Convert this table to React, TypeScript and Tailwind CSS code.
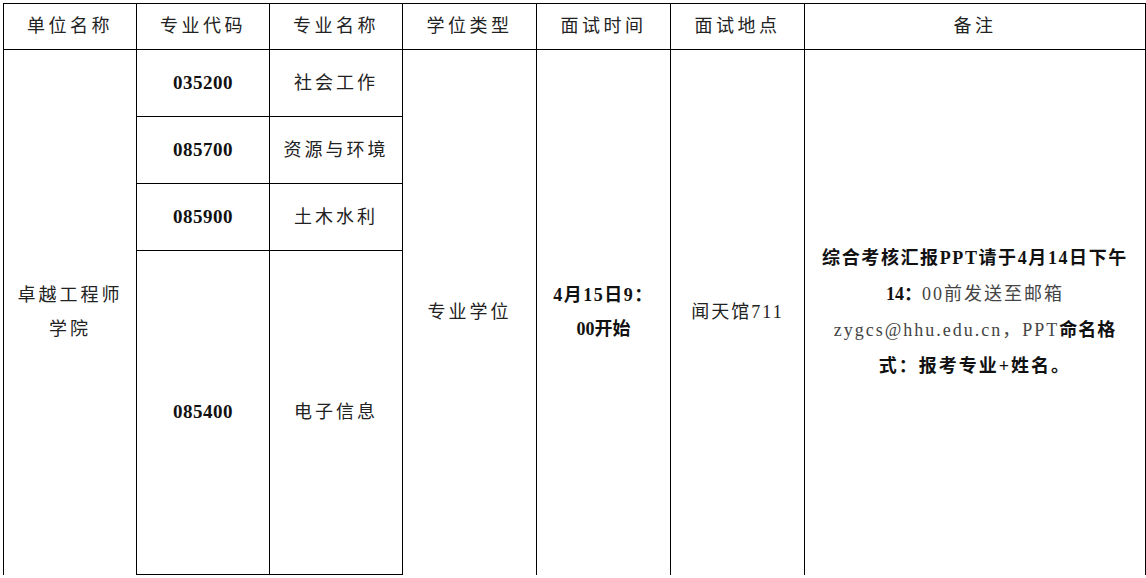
const cjk = '"Liberation Serif", "Noto Sans CJK SC", serif'

function Th({ children }: { children: React.ReactNode }) {
  return (
    <th className="border border-black font-normal text-[18px] tracking-[3.5px] text-[#222] text-center align-middle">
      {children}
    </th>
  )
}

export default function App() {
  return (
    <div className="w-[1146px] h-[578px] bg-white pt-[3px] pl-[3px] overflow-hidden" style={{ fontFamily: cjk }}>
      <table className="table-fixed border-collapse w-[1142px]">
        <colgroup>
          <col className="w-[133px]" />
          <col className="w-[133px]" />
          <col className="w-[133px]" />
          <col className="w-[134px]" />
          <col className="w-[134px]" />
          <col className="w-[134px]" />
          <col className="w-[341px]" />
        </colgroup>
        <thead>
          <tr className="h-[46px]">
            <Th>单位名称</Th>
            <Th>专业代码</Th>
            <Th>专业名称</Th>
            <Th>学位类型</Th>
            <Th>面试时间</Th>
            <Th>面试地点</Th>
            <Th>备注</Th>
          </tr>
        </thead>
        <tbody className="text-[18px] text-[#222]">
          <tr className="h-[67px]">
            <td rowSpan={4} className="border border-black border-b-0 text-center align-middle tracking-[3px] leading-[34px] px-2">
              卓越工程师<br />学院
            </td>
            <td className="border border-black text-center font-bold text-[19px] tracking-[0.5px] text-[#111]">035200</td>
            <td className="border border-black text-center tracking-[3px]">社会工作</td>
            <td rowSpan={4} className="border border-black border-b-0 text-center tracking-[3px]">专业学位</td>
            <td rowSpan={4} className="border border-black border-b-0 text-center font-semibold leading-[34px] text-[#111]">
              <span className="tracking-[1.5px]">4月15日9：</span>
              <br />
              00开始
            </td>
            <td rowSpan={4} className="border border-black border-b-0 text-center tracking-[2px]">闻天馆711</td>
            <td rowSpan={4} className="border border-black border-b-0 text-center align-middle leading-[36px] px-1">
              <div className="font-semibold text-[#111] tracking-[1.6px]">综合考核汇报PPT请于4月14日下午</div>
              <div>
                <span className="font-semibold text-[#111]">14：</span>
                <span className="text-[#444] tracking-[2px]">00前发送至邮箱</span>
              </div>
              <div>
                <span className="text-[#444] tracking-[2px]">zygcs@hhu.edu.cn，PPT</span>
                <span className="font-semibold text-[#111] tracking-[1px]">命名格</span>
              </div>
              <div className="font-semibold text-[#111] tracking-[2px]">式：报考专业+姓名。</div>
            </td>
          </tr>
          <tr className="h-[67px]">
            <td className="border border-black text-center font-bold text-[19px] tracking-[0.5px] text-[#111]">085700</td>
            <td className="border border-black text-center tracking-[3px]">资源与环境</td>
          </tr>
          <tr className="h-[67px]">
            <td className="border border-black text-center font-bold text-[19px] tracking-[0.5px] text-[#111]">085900</td>
            <td className="border border-black text-center tracking-[3px]">土木水利</td>
          </tr>
          <tr className="h-[324px]">
            <td className="border border-black text-center font-bold text-[19px] tracking-[0.5px] text-[#111]">085400</td>
            <td className="border border-black text-center tracking-[3px]">电子信息</td>
          </tr>
        </tbody>
      </table>
    </div>
  )
}
